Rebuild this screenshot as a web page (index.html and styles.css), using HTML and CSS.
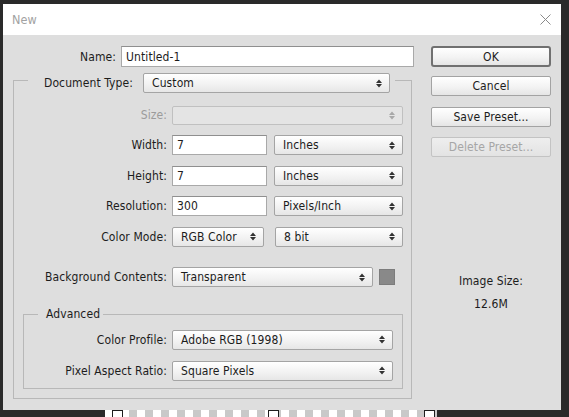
FILE: index.html
```html
<!DOCTYPE html>
<html>
<head>
<meta charset="utf-8">
<title>New</title>
<link rel="stylesheet" href="styles.css">
</head>
<body>
<div class="screen">
  <div class="dialog">
    <div class="titlebar">
      <span class="title">New</span>
      <svg class="close" width="11" height="11" viewBox="0 0 11 11"><path d="M0.5 0.5 L10.5 10.5 M10.5 0.5 L0.5 10.5" stroke="#8a8a8a" stroke-width="1" fill="none"/></svg>
    </div>
    <div class="content">
      <div class="left">
        <div class="name-row">
          <span class="name-label">Name:</span>
          <div class="input name-input">Untitled-1</div>
        </div>
        <fieldset class="group doc-group">
          <legend class="doc-legend">
            <span class="legend-label">Document Type:</span>
            <div class="select doc-select"><span>Custom</span><svg class="arrows" width="6" height="9" viewBox="0 0 6 9"><path d="M0 4 L3 0.5 L6 4 Z M0 5 L3 8.5 L6 5 Z" fill="#333"/></svg></div>
          </legend>
          <div class="grid main-grid">
            <span class="lbl lbl-disabled">Size:</span>
            <div class="select select-disabled size-select"><span></span><svg class="arrows" width="6" height="9" viewBox="0 0 6 9"><path d="M0 4 L3 0.5 L6 4 Z M0 5 L3 8.5 L6 5 Z" fill="#a8a8a8"/></svg></div>

            <span class="lbl">Width:</span>
            <div class="pair">
              <div class="input num-input">7</div>
              <div class="select unit-select"><span>Inches</span><svg class="arrows" width="6" height="9" viewBox="0 0 6 9"><path d="M0 4 L3 0.5 L6 4 Z M0 5 L3 8.5 L6 5 Z" fill="#333"/></svg></div>
            </div>

            <span class="lbl">Height:</span>
            <div class="pair">
              <div class="input num-input">7</div>
              <div class="select unit-select"><span>Inches</span><svg class="arrows" width="6" height="9" viewBox="0 0 6 9"><path d="M0 4 L3 0.5 L6 4 Z M0 5 L3 8.5 L6 5 Z" fill="#333"/></svg></div>
            </div>

            <span class="lbl">Resolution:</span>
            <div class="pair">
              <div class="input num-input">300</div>
              <div class="select unit-select"><span>Pixels/Inch</span><svg class="arrows" width="6" height="9" viewBox="0 0 6 9"><path d="M0 4 L3 0.5 L6 4 Z M0 5 L3 8.5 L6 5 Z" fill="#333"/></svg></div>
            </div>

            <span class="lbl">Color Mode:</span>
            <div class="pair mode-pair">
              <div class="select mode-select"><span>RGB Color</span><svg class="arrows" width="6" height="9" viewBox="0 0 6 9"><path d="M0 4 L3 0.5 L6 4 Z M0 5 L3 8.5 L6 5 Z" fill="#333"/></svg></div>
              <div class="select bit-select"><span>8 bit</span><svg class="arrows" width="6" height="9" viewBox="0 0 6 9"><path d="M0 4 L3 0.5 L6 4 Z M0 5 L3 8.5 L6 5 Z" fill="#333"/></svg></div>
            </div>

            <span class="lbl bg-row">Background Contents:</span>
            <div class="pair bg-pair bg-row">
              <div class="select bg-select"><span>Transparent</span><svg class="arrows" width="6" height="9" viewBox="0 0 6 9"><path d="M0 4 L3 0.5 L6 4 Z M0 5 L3 8.5 L6 5 Z" fill="#333"/></svg></div>
              <div class="swatch"></div>
            </div>
          </div>

          <fieldset class="group adv-group">
            <legend class="adv-legend">Advanced</legend>
            <div class="grid adv-grid">
              <span class="lbl">Color Profile:</span>
              <div class="select adv-select"><span>Adobe RGB (1998)</span><svg class="arrows" width="6" height="9" viewBox="0 0 6 9"><path d="M0 4 L3 0.5 L6 4 Z M0 5 L3 8.5 L6 5 Z" fill="#333"/></svg></div>
              <span class="lbl">Pixel Aspect Ratio:</span>
              <div class="select adv-select"><span>Square Pixels</span><svg class="arrows" width="6" height="9" viewBox="0 0 6 9"><path d="M0 4 L3 0.5 L6 4 Z M0 5 L3 8.5 L6 5 Z" fill="#333"/></svg></div>
            </div>
          </fieldset>
        </fieldset>
      </div>

      <div class="right">
        <div class="btn btn-default">OK</div>
        <div class="btn btn-cancel">Cancel</div>
        <div class="btn btn-save">Save Preset...</div>
        <div class="btn btn-disabled">Delete Preset...</div>
        <div class="info">
          <div class="info-label">Image Size:</div>
          <div class="info-value">12.6M</div>
        </div>
      </div>
    </div>
  </div>
  <div class="strip">
    <span class="handle"></span>
    <span class="handle"></span>
    <span class="handle"></span>
  </div>
</div>
</body>
</html>
```

FILE: styles.css
```css
html, body {
  margin: 0;
  padding: 0;
  background: #2a2a2a;
}

body {
  width: 569px;
  height: 417px;
  overflow: hidden;
  font-family: "DejaVu Sans Condensed", "DejaVu Sans", sans-serif;
  font-size: 12px;
  letter-spacing: 0.1px;
  color: #1c1c1c;
}

.screen {
  padding: 4px 0 0 3px;
}

.dialog {
  width: 558px;
  height: 406px;
  background: #dedede;
  box-sizing: border-box;
}

.titlebar {
  height: 31px;
  background: #ffffff;
  display: flex;
  align-items: center;
  justify-content: space-between;
  padding: 0 10px 0 9px;
  box-sizing: border-box;
}

.title {
  color: #a2a2a2;
  font-size: 12.5px;
}

.close {
  display: block;
}

.content {
  display: flex;
  padding: 11px 0 0 10px;
}

.left {
  width: 401px;
}

.name-row {
  display: flex;
  align-items: center;
  height: 21px;
}

.name-label {
  width: 103px;
  text-align: right;
  margin-right: 5px;
}

.input {
  height: 20px;
  box-sizing: border-box;
  background: #ffffff;
  border: 1px solid #a9a9a9;
  border-top-color: #8f8f8f;
  padding: 0 4px;
  display: flex;
  align-items: center;
  line-height: 14px;
}

.name-input {
  width: 293px;
  height: 21px;
}

.select {
  height: 20px;
  box-sizing: border-box;
  border: 1px solid #a4a4a4;
  border-radius: 2px;
  background: linear-gradient(#ffffff, #f1f1f1 60%, #e6e6e6);
  display: flex;
  align-items: center;
  justify-content: space-between;
  padding: 0 7px 0 8px;
  line-height: 14px;
}

.select .arrows {
  display: block;
  flex: none;
}

.select-disabled {
  background: #e4e4e4;
  border-color: #c0c0c0;
  height: 19px;
}

/* fieldsets */
.group {
  margin: 0;
  padding: 0;
  min-width: 0;
  border: 1px solid #b8b8b8;
}

.doc-group {
  width: 399px;
  box-sizing: border-box;
  margin-top: 1px;
  padding: 0 0 9px 0;
}

.doc-legend {
  margin-left: 14px;
  padding: 5px 5px 0 16px;
  display: flex;
  align-items: center;
}

.legend-label {
  width: 99px;
  white-space: nowrap;
}

.doc-select {
  width: 247px;
}

.grid {
  display: grid;
  align-items: center;
}

.main-grid {
  grid-template-columns: 153px 231px;
  column-gap: 5px;
  row-gap: 10.5px;
  padding-top: 12.5px;
}

.lbl {
  text-align: right;
  white-space: nowrap;
}

.lbl-disabled {
  color: #9b9b9b;
}

.pair {
  display: flex;
  align-items: center;
  justify-content: space-between;
}

.num-input {
  width: 95px;
}

.unit-select {
  width: 129px;
}

.mode-select {
  width: 92px;
}

.bit-select {
  width: 128px;
}

.bg-row {
  margin-top: 10px;
}

.bg-pair {
  justify-content: flex-start;
}

.bg-select {
  width: 201px;
}

.swatch {
  width: 16px;
  height: 16px;
  box-sizing: border-box;
  margin-left: 6px;
  background: #898989;
  border: 1px solid #7c7c7c;
}

.adv-group {
  width: 380px;
  box-sizing: border-box;
  margin: 20px 0 0 9px;
  padding: 0 0 7px 0;
}

.adv-legend {
  margin-left: 14px;
  padding: 0 3px 0 8px;
  line-height: 15px;
}

.adv-grid {
  grid-template-columns: 143px 221px;
  column-gap: 5px;
  row-gap: 11px;
  padding-top: 7.5px;
}

.adv-select {
  width: 221px;
}

/* right column */
.right {
  width: 120px;
  margin-left: 17px;
}

.btn {
  height: 20px;
  box-sizing: border-box;
  border: 1px solid #a3a3a3;
  border-radius: 2px;
  background: linear-gradient(#ffffff, #f3f3f3 55%, #e5e5e5);
  display: flex;
  align-items: center;
  justify-content: center;
  line-height: 14px;
}

.btn-default {
  height: 21px;
  border: 2px solid #707070;
  border-radius: 3px;
}

.btn-cancel {
  margin-top: 9px;
}

.btn-save {
  margin-top: 11px;
}

.btn-disabled {
  margin-top: 10px;
  color: #a6a6a6;
  border-color: #c3c3c3;
  background: linear-gradient(#eeeeee, #e3e3e3);
}

.info {
  margin-top: 116px;
  text-align: center;
  line-height: 16px;
}

.info-value {
  margin-top: 7px;
}

/* canvas strip below */
.strip {
  margin-left: 102px;
  width: 332px;
  height: 7px;
  background: repeating-linear-gradient(90deg, #ffffff 0 8px, #c9c9c9 8px 16px);
  display: flex;
  justify-content: space-between;
  padding: 0 2px 0 7px;
  box-sizing: border-box;
}

.handle {
  width: 11px;
  height: 7px;
  box-sizing: border-box;
  border: 1px solid #1e1e1e;
  border-bottom: none;
  background: #ffffff;
}
```
